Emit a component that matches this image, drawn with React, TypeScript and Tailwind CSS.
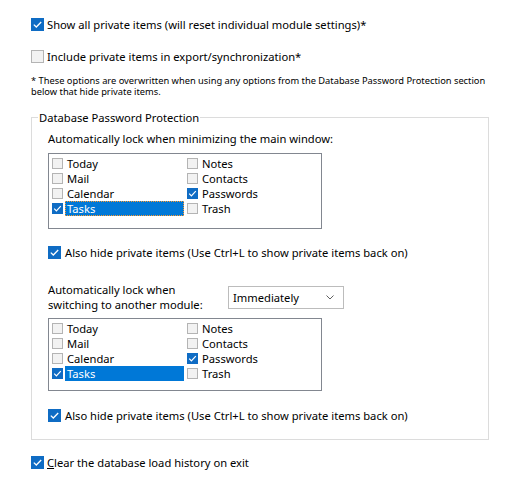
import React from "react";

const font = { fontFamily: '"Noto Sans", "Segoe UI", sans-serif' };

function Check({ checked, small }: { checked?: boolean; small?: boolean }) {
  const size = small ? "w-[11px] h-[11px]" : "w-[13px] h-[13px]";
  if (checked) {
    return (
      <span className={`${size} shrink-0 bg-[#0f6cc4] flex items-center justify-center`}>
        {small ? (
          <svg width="9" height="9" viewBox="0 0 9 9">
            <path d="M1.2 4.6 L3.4 6.8 L7.8 2.2" fill="none" stroke="white" strokeWidth="1.2" />
          </svg>
        ) : (
          <svg width="11" height="11" viewBox="0 0 11 11">
            <path d="M1.8 5.6 L4.3 8 L9.2 3" fill="none" stroke="white" strokeWidth="1.3" />
          </svg>
        )}
      </span>
    );
  }
  return <span className={`${size} shrink-0 border border-[#b4b4b4] bg-[#f2f2f2]`} />;
}

function ListItem({
  label,
  checked,
  selected,
  focus,
}: {
  label: string;
  checked?: boolean;
  selected?: boolean;
  focus?: boolean;
}) {
  return (
    <div className="flex items-center h-[15px]">
      <Check checked={checked} small />
      <span
        className={`ml-[2px] h-[15px] flex items-center pl-[2px] ${
          selected ? "bg-[#0078d7] text-white w-[119px]" : ""
        } ${focus ? "outline-1 outline-dotted outline-[#ff9b2e] -outline-offset-1" : ""}`}
      >
        {label}
      </span>
    </div>
  );
}

function ListBox({ focus, h }: { focus?: boolean; h: string }) {
  return (
    <div className={`w-[274px] ${h} border border-[#828790] bg-white pl-[3px] pt-[2px] flex`}>
      <div className="w-[135px] flex flex-col">
        <ListItem label="Today" />
        <ListItem label="Mail" />
        <ListItem label="Calendar" />
        <ListItem label="Tasks" checked selected focus={focus} />
      </div>
      <div className="flex flex-col">
        <ListItem label="Notes" />
        <ListItem label="Contacts" />
        <ListItem label="Passwords" checked />
        <ListItem label="Trash" />
      </div>
    </div>
  );
}

export default function App() {
  return (
    <div className="w-[518px] h-[493px] bg-white text-black text-[11.2px] leading-[15px] relative" style={font}>
      <div className="pl-[31px] pt-[17px]">
        <div className="flex items-center gap-[3px] h-[15px]">
          <Check checked />
          <span>Show all private items (will reset individual module settings)*</span>
        </div>
        <div className="flex items-center gap-[3px] h-[15px] mt-[17px]">
          <Check />
          <span>Include private items in export/synchronization*</span>
        </div>
        <div className="mt-[11px] text-[9.3px] leading-[11px] w-[470px]">
          * These options are overwritten when using any options from the Database Password Protection section
          below that hide private items.
        </div>
        <div className="relative mt-[20px] w-[458px] h-[323px] border border-[#dcdcdc] pl-[16px] pt-[13px]">
          <span className="absolute -top-[8px] left-[6px] bg-white px-[1px]">Database Password Protection</span>
          <div>Automatically lock when minimizing the main window:</div>
          <div className="mt-[7px]">
            <ListBox focus h="h-[76px]" />
          </div>
          <div className="flex items-center gap-[4px] h-[15px] mt-[16px]">
            <Check checked />
            <span>Also hide private items (Use Ctrl+L to show private items back on)</span>
          </div>
          <div className="flex items-center mt-[22px]">
            <div className="w-[180px]">
              Automatically lock when
              <br />
              switching to another module:
            </div>
            <div className="w-[116px] h-[23px] border border-[#bcbcbc] flex items-center justify-between pl-[4px] pr-[9px]">
              <span>Immediately</span>
              <svg width="8" height="5" viewBox="0 0 8 5">
                <path d="M0.5 0.5 L4 4 L7.5 0.5" fill="none" stroke="#606060" strokeWidth="1" />
              </svg>
            </div>
          </div>
          <div className="mt-[6px]">
            <ListBox h="h-[73px]" />
          </div>
          <div className="flex items-center gap-[4px] h-[15px] mt-[17px]">
            <Check checked />
            <span>Also hide private items (Use Ctrl+L to show private items back on)</span>
          </div>
        </div>
        <div className="flex items-center gap-[3px] h-[15px] mt-[15px]">
          <Check checked />
          <span>
            <span className="underline">C</span>lear the database load history on exit
          </span>
        </div>
      </div>
    </div>
  );
}
